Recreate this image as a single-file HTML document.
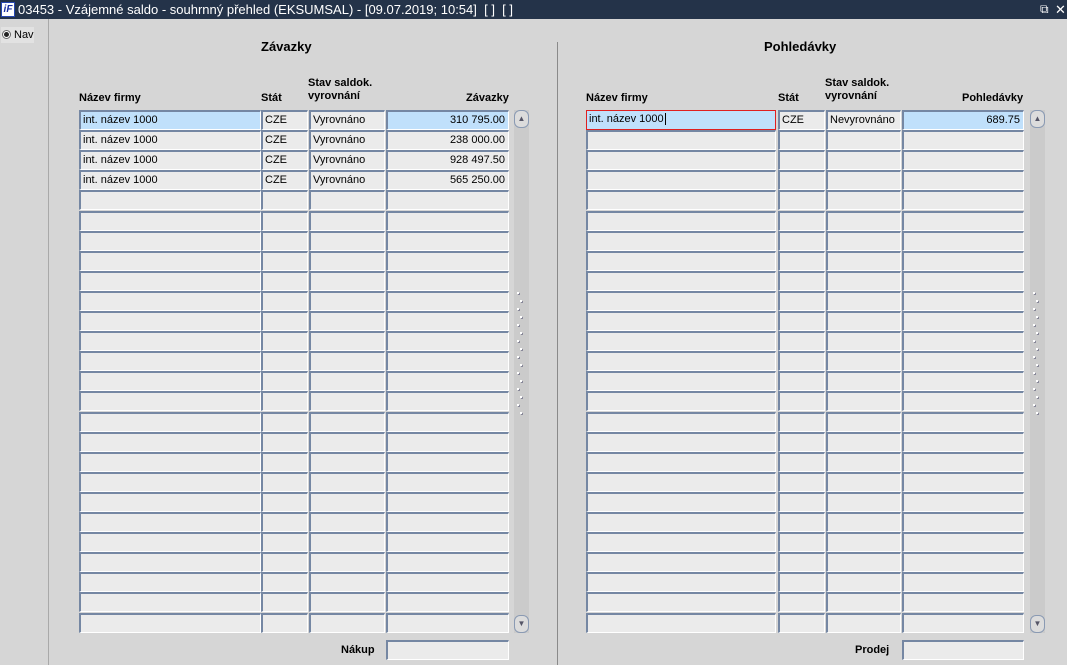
<!DOCTYPE html>
<html><head><meta charset="utf-8"><style>
*{box-sizing:border-box;margin:0;padding:0}
body{width:1067px;height:665px;overflow:hidden;background:#d6d6d6;font-family:"Liberation Sans",Arial,sans-serif;font-size:11px;color:#000;position:relative}
#tb{position:absolute;left:0;top:0;width:1067px;height:19px;background:#243349;color:#fff;font-size:13px;line-height:19px}
#tb .t{position:absolute;left:18px;top:0}
#logo{position:absolute;left:1px;top:2px;width:14px;height:15px;background:#fff;border:1px solid #2747b0;color:#1a2fa0;font-weight:bold;font-style:italic;font-size:10px;line-height:13px;text-align:center}
#nav{position:absolute;left:0;top:19px;width:49px;height:646px;background:#d6d6d6;border-right:1px solid #a9a9a9}
.c{position:absolute;background:#ebebeb;border-top:2px solid #7587a3;border-left:2px solid #7587a3;border-right:1px solid #fff;border-bottom:1px solid #fff;height:20px;line-height:17px;padding-left:2px;white-space:nowrap;overflow:hidden}
.sel{background:#c0e0fb}
.r{text-align:right;padding-right:3px}
.h{position:absolute;font-weight:bold;font-size:11px;line-height:13px}
.sb{position:absolute;width:15px;background:#cbcbcb}
.ar{position:absolute;left:0;width:15px;height:18px;background:#dcdcdc;border:1px solid #8a9ab3;border-radius:6px}
</style></head><body>
<div id="tb"><div id="logo">iF</div><span class="t">03453 - Vzájemné saldo - souhrnný přehled (EKSUMSAL) - [09.07.2019; 10:54]&nbsp; [ ]&nbsp; [ ]</span>
<span style="position:absolute;left:1040px;top:0;font-size:12px">⧉</span><span style="position:absolute;left:1055px;top:0;font-size:13px">✕</span></div>
<div id="nav"><div style="position:absolute;left:1px;top:8px;width:33px;height:16px;background:#e2e2e2"></div>
<div style="position:absolute;left:2px;top:11px;width:9px;height:9px;border-radius:50%;background:#fff;border:1px solid #666"><div style="margin:1px;width:5px;height:5px;border-radius:50%;background:#222"></div></div>
<span style="position:absolute;left:14px;top:10px">Nav</span></div>
<div style="position:absolute;left:557px;top:42px;width:1px;height:623px;background:#8a8a8a"></div>

<div class="h" style="left:261px;top:40px;font-size:13px">Závazky</div>
<div class="h" style="left:79px;top:92px">Název firmy</div>
<div class="h" style="left:261px;top:92px">Stát</div>
<div class="h" style="left:308px;top:77px">Stav saldok.<br>vyrovnání</div>
<div class="h" style="left:466px;top:92px">Závazky</div>

<div class="h" style="left:764px;top:40px;font-size:13px">Pohledávky</div>
<div class="h" style="left:586px;top:92px">Název firmy</div>
<div class="h" style="left:778px;top:92px">Stát</div>
<div class="h" style="left:825px;top:77px">Stav saldok.<br>vyrovnání</div>
<div class="h" style="left:962px;top:92px">Pohledávky</div>

<div class="h" style="left:341px;top:644px">Nákup</div>
<div class="c" style="left:386px;top:640px;width:123px"></div>
<div class="h" style="left:855px;top:644px">Prodej</div>
<div class="c" style="left:902px;top:640px;width:122px"></div>

<div id="g"></div>
<script>
var L=[[79,182],[261,47],[309,76],[386,123]],R=[[586,190],[778,47],[826,75],[902,122]];
var dl=[["int. název 1000","CZE","Vyrovnáno","310 795.00"],["int. název 1000","CZE","Vyrovnáno","238 000.00"],["int. název 1000","CZE","Vyrovnáno","928 497.50"],["int. název 1000","CZE","Vyrovnáno","565 250.00"]];
var dr=[["int. název 1000","CZE","Nevyrovnáno","689.75"]];
var h="";
function grid(C,d){for(var i=0;i<26;i++){var y=Math.round(110+i*20.1);for(var j=0;j<4;j++){var t=d[i]?d[i][j]:"";var cls="c"+(i==0&&(j==0||j==3)?" sel":"")+(j==3?" r":"");var st="";if(C===R&&i==0&&j==0)st="border:1px solid #e02020;";h+='<div class="'+cls+'" style="left:'+C[j][0]+'px;top:'+y+'px;width:'+C[j][1]+'px;'+st+'">'+t+(st?'<span style="border-left:1px solid #000;margin-left:1px"></span>':'')+'</div>';}}}
grid(L,dl);grid(R,dr);
function sb(x){h+='<div class="sb" style="left:'+x+'px;top:110px;height:523px"></div>';h+='<div class="ar" style="left:'+x+'px;top:110px;font-size:8px;color:#556;text-align:center;line-height:15px">▲</div>';h+='<div class="ar" style="left:'+x+'px;top:615px;font-size:8px;color:#556;text-align:center;line-height:15px">▼</div>';for(var k=0;k<16;k++){var y=292+k*8;h+='<div style="position:absolute;left:'+(x+(k%2?6:3))+'px;top:'+y+'px;width:2px;height:2px;background:#fff;box-shadow:1px 1px 0 #889"></div>';}}
sb(514);sb(1030);
document.getElementById("g").innerHTML=h;
</script>
</body></html>
